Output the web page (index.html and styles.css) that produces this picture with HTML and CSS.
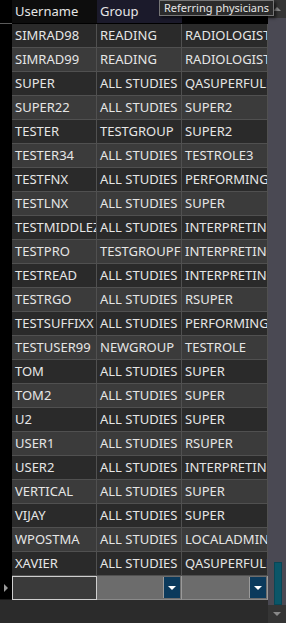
FILE: index.html
```html
<!DOCTYPE html>
<html>
<head>
<meta charset="utf-8">
<link rel="stylesheet" href="styles.css">
</head>
<body>
<div class="app">
  <div class="grid">
    <div class="row head">
      <div class="rh"></div>
      <div class="cell h-user">Username</div>
      <div class="cell h-group">Group</div>
      <div class="cell h-role">Role</div>
    </div>
    <div class="row"><div class="rh"></div><div class="cell">SIMRAD98</div><div class="cell">READING</div><div class="cell">RADIOLOGIST</div></div>
    <div class="row"><div class="rh"></div><div class="cell">SIMRAD99</div><div class="cell">READING</div><div class="cell">RADIOLOGIST</div></div>
    <div class="row"><div class="rh"></div><div class="cell">SUPER</div><div class="cell">ALL STUDIES</div><div class="cell">QASUPERFULL</div></div>
    <div class="row"><div class="rh"></div><div class="cell">SUPER22</div><div class="cell">ALL STUDIES</div><div class="cell">SUPER2</div></div>
    <div class="row"><div class="rh"></div><div class="cell">TESTER</div><div class="cell">TESTGROUP</div><div class="cell">SUPER2</div></div>
    <div class="row"><div class="rh"></div><div class="cell">TESTER34</div><div class="cell">ALL STUDIES</div><div class="cell">TESTROLE3</div></div>
    <div class="row"><div class="rh"></div><div class="cell">TESTFNX</div><div class="cell">ALL STUDIES</div><div class="cell">PERFORMING</div></div>
    <div class="row"><div class="rh"></div><div class="cell">TESTLNX</div><div class="cell">ALL STUDIES</div><div class="cell">SUPER</div></div>
    <div class="row"><div class="rh"></div><div class="cell">TESTMIDDLEZ</div><div class="cell">ALL STUDIES</div><div class="cell">INTERPRETING</div></div>
    <div class="row"><div class="rh"></div><div class="cell">TESTPRO</div><div class="cell">TESTGROUPFULL</div><div class="cell">INTERPRETING</div></div>
    <div class="row"><div class="rh"></div><div class="cell">TESTREAD</div><div class="cell">ALL STUDIES</div><div class="cell">INTERPRETING</div></div>
    <div class="row"><div class="rh"></div><div class="cell">TESTRGO</div><div class="cell">ALL STUDIES</div><div class="cell">RSUPER</div></div>
    <div class="row"><div class="rh"></div><div class="cell">TESTSUFFIXX</div><div class="cell">ALL STUDIES</div><div class="cell">PERFORMING</div></div>
    <div class="row"><div class="rh"></div><div class="cell">TESTUSER99</div><div class="cell">NEWGROUP</div><div class="cell">TESTROLE</div></div>
    <div class="row"><div class="rh"></div><div class="cell">TOM</div><div class="cell">ALL STUDIES</div><div class="cell">SUPER</div></div>
    <div class="row"><div class="rh"></div><div class="cell">TOM2</div><div class="cell">ALL STUDIES</div><div class="cell">SUPER</div></div>
    <div class="row"><div class="rh"></div><div class="cell">U2</div><div class="cell">ALL STUDIES</div><div class="cell">SUPER</div></div>
    <div class="row"><div class="rh"></div><div class="cell">USER1</div><div class="cell">ALL STUDIES</div><div class="cell">RSUPER</div></div>
    <div class="row"><div class="rh"></div><div class="cell">USER2</div><div class="cell">ALL STUDIES</div><div class="cell">INTERPRETING</div></div>
    <div class="row"><div class="rh"></div><div class="cell">VERTICAL</div><div class="cell">ALL STUDIES</div><div class="cell">SUPER</div></div>
    <div class="row"><div class="rh"></div><div class="cell">VIJAY</div><div class="cell">ALL STUDIES</div><div class="cell">SUPER</div></div>
    <div class="row"><div class="rh"></div><div class="cell">WPOSTMA</div><div class="cell">ALL STUDIES</div><div class="cell">LOCALADMIN</div></div>
    <div class="row"><div class="rh"></div><div class="cell">XAVIER</div><div class="cell">ALL STUDIES</div><div class="cell">QASUPERFULL</div></div>
    <div class="row newrow">
      <div class="rh rh-new"><span class="arrow-right"></span></div>
      <div class="cell edit"></div>
      <div class="cell combo"><span class="dd"><span class="tri-down"></span></span></div>
      <div class="cell combo"><span class="dd"><span class="tri-down"></span></span></div>
    </div>
  </div>
  <div class="scrollbar">
    <div class="sb-btn"><span class="tri-up"></span></div>
    <div class="sb-track"><div class="sb-thumb"></div></div>
    <div class="sb-btn"><span class="tri-down gray"></span></div>
  </div>
  <div class="tooltip">Referring physicians</div>
</div>
</body>
</html>
```

FILE: styles.css
```css
html, body {
  margin: 0;
  padding: 0;
}
body {
  background: #2b2b2b;
  font-family: "Noto Sans", "Open Sans", sans-serif;
  font-size: 13px;
  color: #e6e6e6;
  overflow: hidden;
}
.app {
  position: relative;
  display: flex;
  width: 286px;
  height: 623px;
}
.grid {
  width: 268px;
  display: flex;
  flex-direction: column;
  background: #2b2b2b;
}
.row {
  display: grid;
  grid-template-columns: 12px 85px 85px 86px;
  height: 24px;
  background: #2a2a2a;
}
.row:nth-child(odd) {
  background: #3b3b3b;
}
.row.head {
  background: #000;
}
.rh {
  background: #000;
}
.head .rh {
  border-bottom: 1px solid #5a5a5a;
  box-sizing: border-box;
}
.cell {
  box-sizing: border-box;
  border-right: 1px solid #505050;
  border-bottom: 1px solid #505050;
  padding: 0 0 0 3px;
  line-height: 23px;
  white-space: nowrap;
  overflow: hidden;
}
.head .cell {
  border-right: none;
  border-bottom: 1px solid #000;
  line-height: 22px;
}
.h-user { background: #0d0d0d; }
.h-group { background: #1b1a2b; }
.h-role { background: #000; }
.newrow {
  background: #2b2b2b !important;
  height: 24px;
}
.rh-new {
  display: flex;
  align-items: center;
  padding-left: 4px;
  border-bottom: 1px solid #1a1a1a;
}
.arrow-right {
  width: 0;
  height: 0;
  border-top: 4px solid transparent;
  border-bottom: 4px solid transparent;
  border-left: 4px solid #9a9a9a;
}
.cell.edit {
  background: #3a3a3a;
  border: 1px solid #cfcfcf;
}
.cell.combo {
  background: #6c6c6c;
  border-right: 1px solid #9a9a9a;
  border-bottom: 1px solid #8a8a8a;
  display: flex;
  justify-content: flex-end;
  padding: 1px 1px 1px 0;
}
.dd {
  width: 16px;
  background: #0b3a5c;
  border-left: 1px solid #9a9a9a;
  display: flex;
  align-items: center;
  justify-content: center;
}
.tri-down {
  width: 0;
  height: 0;
  border-left: 4px solid transparent;
  border-right: 4px solid transparent;
  border-top: 4px solid #ffffff;
}
.tri-down.gray {
  border-top-color: #8a8a8a;
}
.tri-up {
  width: 0;
  height: 0;
  border-left: 4px solid transparent;
  border-right: 4px solid transparent;
  border-bottom: 4px solid #8a8a8a;
}
.scrollbar {
  width: 18px;
  display: flex;
  flex-direction: column;
  background: #4a4953;
}
.sb-btn {
  height: 18px;
  background: #353535;
  display: flex;
  align-items: center;
  justify-content: center;
}
.sb-track {
  flex: 1;
  display: flex;
  flex-direction: column;
  justify-content: flex-end;
  align-items: center;
}
.sb-thumb {
  width: 8px;
  height: 43px;
  box-sizing: border-box;
  background: #0a5668;
  border: 1px solid #084656;
  margin-left: 2px;
}
.tooltip {
  position: absolute;
  left: 159px;
  top: 0;
  height: 16px;
  width: 115px;
  box-sizing: border-box;
  background: #2b2b2b;
  border: 1px solid #767676;
  color: #e6e6e6;
  font-size: 11px;
  line-height: 14px;
  padding-left: 4px;
  white-space: nowrap;
  overflow: hidden;
  box-shadow: 2px 2px 3px rgba(0, 0, 0, 0.6);
}
```
